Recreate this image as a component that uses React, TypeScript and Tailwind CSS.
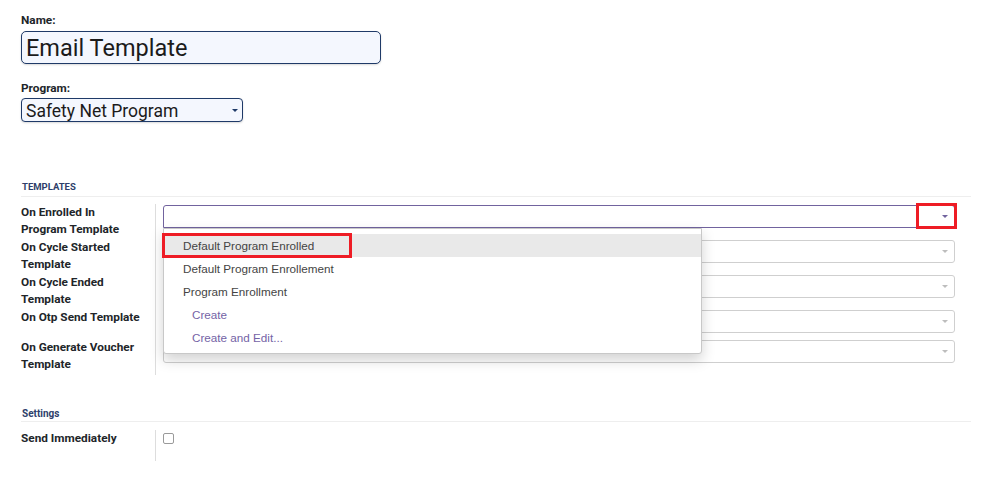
import React from "react";

interface TemplateRow {
  label: string[];
  height: string;
  active?: boolean;
}

const rows: TemplateRow[] = [
  { label: ["On Enrolled In", "Program Template"], height: "h-[35px]", active: true },
  { label: ["On Cycle Started", "Template"], height: "h-[35px]" },
  { label: ["On Cycle Ended", "Template"], height: "h-[35px]" },
  { label: ["On Otp Send Template"], height: "h-[30px]" },
  { label: ["On Generate Voucher", "Template"], height: "h-[36px]" },
];

const options = [
  "Default Program Enrolled",
  "Default Program Enrollement",
  "Program Enrollment",
];

const Caret = ({ color }: { color: string }) => (
  <span
    className={`inline-block w-0 h-0 border-l-[3px] border-r-[3px] border-t-[3px] border-l-transparent border-r-transparent ${color}`}
  />
);

const App: React.FC = () => {
  return (
    <div className="w-[1001px] h-[483px] bg-white font-['Roboto',sans-serif] text-[#212529] relative overflow-hidden">
      <div className="pl-[21px] pt-[13px] w-[971px]">
        {/* Name */}
        <div className="text-[11.8px] leading-[14px] font-bold">Name:</div>
        <div className="mt-[4px] w-[360px] h-[33px] border border-[#1f3a68] rounded-[5px] bg-[#f4f7fe] shadow-[0_1px_2px_rgba(0,0,0,0.15)] flex items-center pl-[4px] pt-[1px]">
          <span className="text-[23.5px] leading-[30px] text-[#1b1b1b]">Email Template</span>
        </div>

        {/* Program */}
        <div className="mt-[17px] text-[11.8px] leading-[14px] font-bold">Program:</div>
        <div className="mt-[3px] w-[222px] h-[24px] border border-[#1f3a68] rounded-[4px] bg-[#f4f7fe] shadow-[0_1px_2px_rgba(0,0,0,0.15)] flex items-center justify-between pl-[4px] pr-[4px]">
          <span className="text-[17.5px] leading-[22px] text-[#1b1b1b] pt-[2px]">Safety Net Program</span>
          <Caret color="border-t-[#1f3a68]" />
        </div>

        {/* Templates */}
        <div className="mt-[59px] border-b border-[#eeeeee] pb-[3px]">
          <div className="pl-[1px] text-[9.5px] leading-[12px] font-bold text-[#2f3f6b]">TEMPLATES</div>
        </div>
        <div className="mt-[7px]">
          {rows.map((row, i) => (
            <div key={i} className={`flex ${row.height}`}>
              <div className="w-[134px] text-[11.8px] leading-[17px] font-bold">
                {row.label.map((l) => (
                  <div key={l}>{l}</div>
                ))}
              </div>
              <div className="flex-1 border-l border-[#dddddd] pl-[7px] pr-[16px] pt-[1px]">
                <div
                  className={`relative h-[23px] border flex items-center justify-end pr-[6px] ${
                    row.active ? "border-[#71639e] rounded-t-[3px]" : "border-[#cfcfcf] rounded-[3px]"
                  }`}
                >
                  <Caret color={row.active ? "border-t-[#71639e]" : "border-t-[#bdbdbd]"} />
                  {row.active && (
                    <>
                      <div className="absolute -right-[3px] -top-[3px] w-[41px] h-[26px] border-[3px] border-[#ee1c25]" />
                      <div className="absolute left-[-1px] top-[22px] w-[539px] h-[126px] bg-white border border-[#c8c8c8] rounded-b-[3px] shadow-[0_6px_14px_rgba(0,0,0,0.18)] pt-[5px] z-10 font-['Liberation_Sans',Arial,sans-serif]">
                        {options.map((o, j) => (
                          <div
                            key={o}
                            className={`relative h-[23px] pl-[19px] flex items-center text-[11.7px] text-[#444444] ${
                              j === 0 ? "bg-[#e9e9e9]" : ""
                            }`}
                          >
                            {o}
                            {j === 0 && (
                              <div className="absolute left-[-2px] top-[-1px] w-[190px] h-[25px] border-[3px] border-[#ee1c25]" />
                            )}
                          </div>
                        ))}
                        <div className="h-[23px] pl-[28px] flex items-center text-[11.7px] text-[#7463a6]">Create</div>
                        <div className="h-[23px] pl-[28px] flex items-center text-[11.7px] text-[#7463a6]">Create and Edit...</div>
                      </div>
                    </>
                  )}
                </div>
              </div>
            </div>
          ))}
        </div>

        {/* Settings */}
        <div className="mt-[33px] border-b border-[#eeeeee] pb-[1px]">
          <div className="pl-[1px] text-[10px] leading-[12px] font-bold text-[#2f3f6b]">Settings</div>
        </div>
        <div className="mt-[8px] flex h-[31px]">
          <div className="w-[134px] text-[11.8px] leading-[17px] font-bold">Send Immediately</div>
          <div className="flex-1 border-l border-[#dddddd] pl-[7px] pt-[3px]">
            <div className="w-[11px] h-[11px] border border-[#9a9a9a] rounded-[2px] bg-white" />
          </div>
        </div>
      </div>
    </div>
  );
};

export default App;
